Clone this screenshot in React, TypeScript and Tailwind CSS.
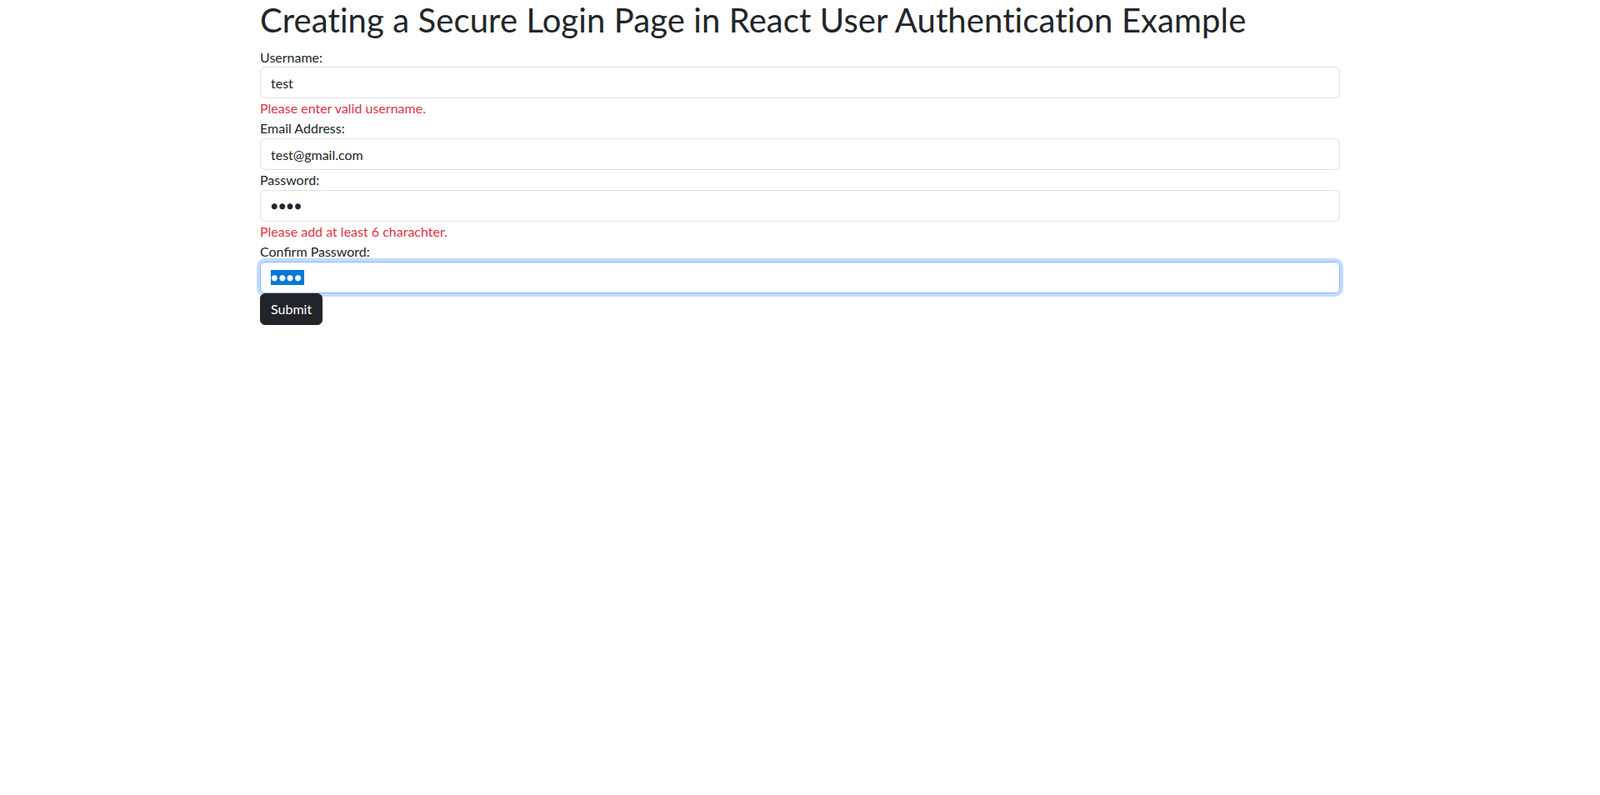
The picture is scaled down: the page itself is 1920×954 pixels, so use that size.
import { useState } from "react";

export default function App() {
  const [username] = useState("test");
  const [email] = useState("test@gmail.com");

  return (
    <div className="min-h-screen bg-white text-[#212529] font-['Lato','Open_Sans',sans-serif] text-base leading-6">
      <div className="mx-auto w-[1320px] px-3">
        <h1 className="mb-2 text-[40px] leading-[48px] font-normal tracking-[0.1px]">
          Creating a Secure Login Page in React User Authentication Example
        </h1>
        <form onSubmit={(e) => e.preventDefault()}>
          <div>
            <label className="block pt-px">Username:</label>
            <input
              type="text"
              defaultValue={username}
              readOnly
              className="-mt-px block h-[38px] w-full rounded-[6px] border border-[#dee2e6] px-3 py-1.5 outline-none"
            />
            <div className="text-[#dc3545]">Please enter valid username.</div>
          </div>
          <div>
            <label className="block">Email Address:</label>
            <input
              type="email"
              defaultValue={email}
              readOnly
              className="block h-[38px] w-full rounded-[6px] border border-[#dee2e6] px-3 py-1.5 outline-none"
            />
          </div>
          <div>
            <label className="block">Password:</label>
            <div className="flex h-[38px] w-full items-center rounded-[6px] border border-[#dee2e6] px-3">
              <span className="text-[14px] tracking-[1px] leading-4">●●●●</span>
            </div>
            <div className="text-[#dc3545]">Please add at least 6 charachter.</div>
          </div>
          <div>
            <label className="block">Confirm Password:</label>
            <div className="flex h-[38px] w-full items-center rounded-[6px] border border-[#86b7fe] px-3 shadow-[0_0_0_4px_rgba(13,110,253,0.25)]">
              <span className="bg-[#0078d7] py-px pr-[2px] text-[14px] leading-4 tracking-[1px] text-white">●●●●</span>
            </div>
          </div>
          <button
            type="submit"
            className="h-[38px] rounded-[6px] border border-[#212529] bg-[#212529] px-3 text-white"
          >
            Submit
          </button>
        </form>
      </div>
    </div>
  );
}
